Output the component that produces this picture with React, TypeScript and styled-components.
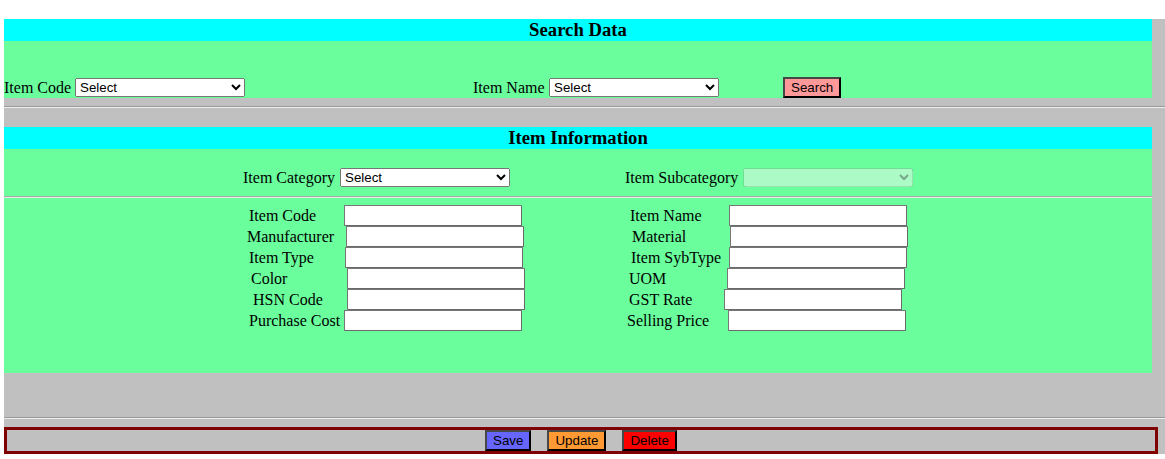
import React from "react";
import styled, { createGlobalStyle } from "styled-components";

const Global = createGlobalStyle`
  html, body { margin: 0; padding: 0; background: #ffffff; }
  body { font-family: "Liberation Serif", "Times New Roman", serif; font-size: 16px; color: #000; }
`;

const Page = styled.div`
  padding: 19px 0 0 4px;
  overflow: hidden;
`;

const Frame = styled.div`
  width: 1161px;
  background: #c0c0c0;
  display: flex;
  flex-direction: column;
`;

const Section = styled.section`
  width: 1148px;
  display: flex;
  flex-direction: column;
`;

const Title = styled.h3`
  margin: 0;
  height: 22px;
  line-height: 22px;
  background: #00ffff;
  text-align: center;
  font-size: 18.7px;
  font-weight: bold;
  font-family: "Liberation Serif", "Times New Roman", serif;
`;

const Green = styled.div<{ $h?: number }>`
  background: #6aff9c;
  ${(p) => (p.$h ? `height: ${p.$h}px;` : "")}
  box-sizing: border-box;
`;

const SearchRow = styled.div`
  height: 57px;
  display: grid;
  grid-template-columns: 469px 310px auto;
  align-items: end;
`;

const Group = styled.div`
  display: flex;
  align-items: center;
`;

const Label = styled.label<{ $w: number; $ml?: number }>`
  width: ${(p) => p.$w}px;
  margin-left: ${(p) => p.$ml ?? 0}px;
  flex: none;
  white-space: nowrap;
  font-size: 16px;
  font-family: "Liberation Serif", "Times New Roman", serif;
`;

const Select = styled.select<{ $mb?: number }>`
  width: 170px;
  height: 19px;
  box-sizing: border-box;
  font-family: "Liberation Sans", Arial, sans-serif;
  font-size: 13.33px;
  margin: 0 0 ${(p) => p.$mb ?? 0}px 0;
`;

const Button = styled.button<{ $bg: string }>`
  font-family: "Liberation Sans", Arial, sans-serif;
  font-size: 13.33px;
  height: 21px;
  padding: 0 6px;
  margin: 0;
  background: ${(p) => p.$bg};
  color: #000;
  border-width: 2px;
  border-style: solid;
  border-color: #474747 #000 #000 #474747;
  box-sizing: border-box;
  line-height: 17px;
`;

const Divider = styled.hr<{ $mt: number; $mb: number }>`
  margin: ${(p) => p.$mt}px 0 ${(p) => p.$mb}px 0;
  height: 0;
  border: none;
  border-top: 1px solid #9a9a9a;
  border-bottom: 1px solid #eeeeee;
`;

const InnerRule = styled.hr`
  margin: 0;
  height: 0;
  border: none;
  border-top: 1px solid #a8a8a8;
  border-bottom: 1px solid #eaeaea;
`;

const CategoryRow = styled.div`
  height: 47px;
  box-sizing: border-box;
  padding-top: 19px;
  display: grid;
  grid-template-columns: 382px auto;
  align-items: start;
  padding-left: 239px;
`;

const Fields = styled.div`
  padding: 7px 0 42px 236px;
  display: grid;
  grid-template-columns: 380px auto;
  grid-auto-rows: 21px;
`;

const FieldWrap = styled.div`
  display: flex;
  align-items: center;
  height: 21px;
`;

const Input = styled.input`
  width: 178px;
  height: 21px;
  box-sizing: border-box;
  margin: 0;
  padding: 1px 2px;
  border: 1px solid #767676;
  border-right-color: #6a6a6a;
  border-bottom-color: #6a6a6a;
  border-radius: 1px;
  font-family: "Liberation Sans", Arial, sans-serif;
  font-size: 13.33px;
  background: #fff;
`;

const ActionBar = styled.div`
  width: 1154px;
  box-sizing: border-box;
  border: 3px solid #800000;
  height: 27px;
  display: flex;
  justify-content: center;
  align-items: center;
  gap: 16px;
`;

type F = { label: string; lx: number; ix: number };

const Field = ({ label, lx, ix, base }: F & { base: number }) => (
  <FieldWrap>
    <Label $ml={lx - base} $w={ix - lx}>{label}</Label>
    <Input type="text" />
  </FieldWrap>
);

const left: F[] = [
  { label: "Item Code", lx: 249, ix: 344 },
  { label: "Manufacturer", lx: 247, ix: 346 },
  { label: "Item Type", lx: 249, ix: 345 },
  { label: "Color", lx: 251, ix: 347 },
  { label: "HSN Code", lx: 253, ix: 347 },
  { label: "Purchase Cost", lx: 249, ix: 344 },
];

const right: F[] = [
  { label: "Item Name", lx: 630, ix: 729 },
  { label: "Material", lx: 632, ix: 730 },
  { label: "Item SybType", lx: 631, ix: 729 },
  { label: "UOM", lx: 629, ix: 727 },
  { label: "GST Rate", lx: 629, ix: 724 },
  { label: "Selling Price", lx: 627, ix: 728 },
];

export default function App() {
  return (
    <>
      <Global />
      <Page>
        <Frame>
          <Section>
            <Title>Search Data</Title>
            <Green>
              <SearchRow>
                <Group>
                  <Label $w={71}>Item Code</Label>
                  <Select $mb={1}>
                    <option>Select</option>
                  </Select>
                </Group>
                <Group>
                  <Label $w={76}>Item Name</Label>
                  <Select $mb={1}>
                    <option>Select</option>
                  </Select>
                </Group>
                <Group>
                  <Button $bg="#ff9999">Search</Button>
                </Group>
              </SearchRow>
            </Green>
          </Section>
          <Divider $mt={8} $mb={19} />
          <Section>
            <Title>Item Information</Title>
            <Green $h={224}>
              <CategoryRow>
                <Group>
                  <Label $w={97}>Item Category</Label>
                  <Select>
                    <option>Select</option>
                  </Select>
                </Group>
                <Group>
                  <Label $w={118}>Item Subcategory</Label>
                  <Select disabled>
                    <option></option>
                  </Select>
                </Group>
              </CategoryRow>
              <InnerRule />
              <Fields>
                {left.map((l, i) => (
                  <React.Fragment key={l.label}>
                    <Field {...l} base={240} />
                    <Field {...right[i]} base={620} />
                  </React.Fragment>
                ))}
              </Fields>
            </Green>
          </Section>
          <Divider $mt={44} $mb={8} />
          <ActionBar>
            <Button $bg="#6666ff">Save</Button>
            <Button $bg="#ff9933">Update</Button>
            <Button $bg="#ff0000">Delete</Button>
          </ActionBar>
        </Frame>
      </Page>
    </>
  );
}
